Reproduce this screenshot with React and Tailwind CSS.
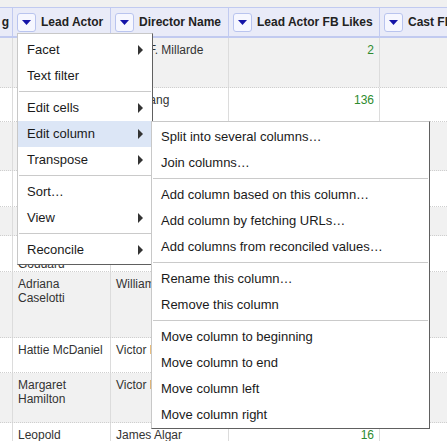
import React from 'react'

const COLS = ['w-[13px]', 'w-[98px]', 'w-[118px]', 'w-[151px]', 'flex-1 min-w-0']

// cells fully hidden behind the open menus are left empty
const ROWS = [
  { h: 'h-[50px]', actor: '', director: 'Harry F. Millarde', likes: '2' },
  { h: 'h-[34px]', actor: '', director: 'Fritz Lang', likes: '136' },
  { h: 'h-[49px]', actor: '', director: '', likes: '' },
  { h: 'h-[36px]', actor: '', director: '', likes: '' },
  { h: 'h-[29px]', actor: '', director: '', likes: '' },
  { h: 'h-[36px]', actor: 'Paulette Goddard', director: '', likes: '', pt: 'pt-[7px]' },
  { h: 'h-[66px]', actor: 'Adriana Caselotti', director: 'William Cottrell', likes: '' },
  { h: 'h-[35px]', actor: 'Hattie McDaniel', director: 'Victor Fleming', likes: '' },
  { h: 'h-[50px]', actor: 'Margaret Hamilton', director: 'Victor Fleming', likes: '' },
  { h: 'h-[40px]', actor: 'Leopold Stokowski', director: 'James Algar', likes: '16' },
]

const MAIN_MENU = [
  { label: 'Facet', sub: true },
  { label: 'Text filter' },
  'sep',
  { label: 'Edit cells', sub: true },
  { label: 'Edit column', sub: true, active: true },
  { label: 'Transpose', sub: true },
  'sep',
  { label: 'Sort…' },
  { label: 'View', sub: true },
  'sep',
  { label: 'Reconcile', sub: true },
]

const SUB_MENU = [
  'Split into several columns…',
  'Join columns…',
  'sep',
  'Add column based on this column…',
  'Add column by fetching URLs…',
  'Add columns from reconciled values…',
  'sep',
  'Rename this column…',
  'Remove this column',
  'sep',
  'Move column to beginning',
  'Move column to end',
  'Move column left',
  'Move column right',
]

function DropButton() {
  return (
    <div className="w-[19px] h-[19px] shrink-0 rounded-[3px] border border-[#b9c4ee] bg-[#f6f7ff] flex items-center justify-center">
      <svg width="9" height="5" viewBox="0 0 9 5"><polygon points="0,0 9,0 4.5,5" fill="#1414a8" /></svg>
    </div>
  )
}

function HeadCell({ cls, label, last }) {
  return (
    <div className={`${cls} h-full flex items-center gap-[5px] pl-[4px] overflow-hidden whitespace-nowrap ${last ? '' : 'border-r border-[#c1caf0]'}`}>
      <DropButton />
      <span className="text-[12px] font-bold text-[#222]">{label}</span>
    </div>
  )
}

function Separator() {
  return <div className="mt-[2px] mb-[3px] mx-[1px] h-px bg-[#cacaca]" />
}

function Arrow() {
  return (
    <svg width="5" height="10" viewBox="0 0 5 10" className="shrink-0"><polygon points="0,0 5,5 0,10" fill="#333" /></svg>
  )
}

export default function App() {
  return (
    <div className="relative w-[447px] h-[441px] overflow-hidden bg-white font-['Liberation_Sans',Arial,sans-serif]">
      <div className="h-[7px] bg-[#f0f0f0]" />

      {/* header */}
      <div className="flex h-[31px] border-t border-b-2 border-[#c1caf0] bg-[#e9ebf8]">
        <div className={`${COLS[0]} h-full flex items-center justify-end pr-[3px] border-r border-[#c1caf0] overflow-hidden`}>
          <span className="text-[12px] font-bold text-[#222]">g</span>
        </div>
        <HeadCell cls={COLS[1]} label="Lead Actor" />
        <HeadCell cls={COLS[2]} label="Director Name" />
        <HeadCell cls={COLS[3]} label="Lead Actor FB Likes" />
        <HeadCell cls={COLS[4]} label="Cast FB Likes" last />
      </div>

      {/* rows */}
      {ROWS.map((r, i) => (
        <div key={i} className={`flex ${r.h} border-b border-dotted border-[#cfcfcf] ${i % 2 === 0 ? 'bg-[#f1f1f1]' : 'bg-white'} text-[12px] leading-[14px] text-[#333]`}>
          <div className={`${COLS[0]} border-r border-[#dcdcdc]`} />
          <div className={`${COLS[1]} border-r border-[#dcdcdc] pl-[5px] pr-[4px] ${r.pt || 'pt-[5px]'}`}>{r.actor}</div>
          <div className={`${COLS[2]} border-r border-[#dcdcdc] pl-[5px] pr-[4px] pt-[5px]`}>{r.director}</div>
          <div className={`${COLS[3]} border-r border-[#dcdcdc] pr-[5px] pt-[5px] text-right text-[#2e8b2e]`}>{r.likes}</div>
          <div className={COLS[4]} />
        </div>
      ))}

      {/* column menu */}
      <div className="absolute left-[17px] top-[33px] w-[136px] bg-white border border-[#c8c8c8] border-r-[#606060] border-b-[#606060] pt-[3px] pb-[1px] text-[13px] text-[#1a1a1a]">
        {MAIN_MENU.map((m, i) =>
          m === 'sep' ? (
            <Separator key={i} />
          ) : (
            <div key={i} className={`h-[26px] flex items-center justify-between pl-[9px] pr-[9px] ${m.active ? 'bg-[#dce6f6]' : ''}`}>
              <span>{m.label}</span>
              {m.sub && <Arrow />}
            </div>
          )
        )}
      </div>

      {/* edit column submenu */}
      <div className="absolute left-[151px] top-[121px] w-[279px] bg-white border border-[#c8c8c8] border-r-[#606060] border-b-[#606060] pt-[2px] text-[13px] text-[#1a1a1a]">
        {SUB_MENU.map((m, i) =>
          m === 'sep' ? (
            <Separator key={i} />
          ) : (
            <div key={i} className="h-[26px] flex items-center pl-[9px] whitespace-nowrap">{m}</div>
          )
        )}
      </div>
    </div>
  )
}
